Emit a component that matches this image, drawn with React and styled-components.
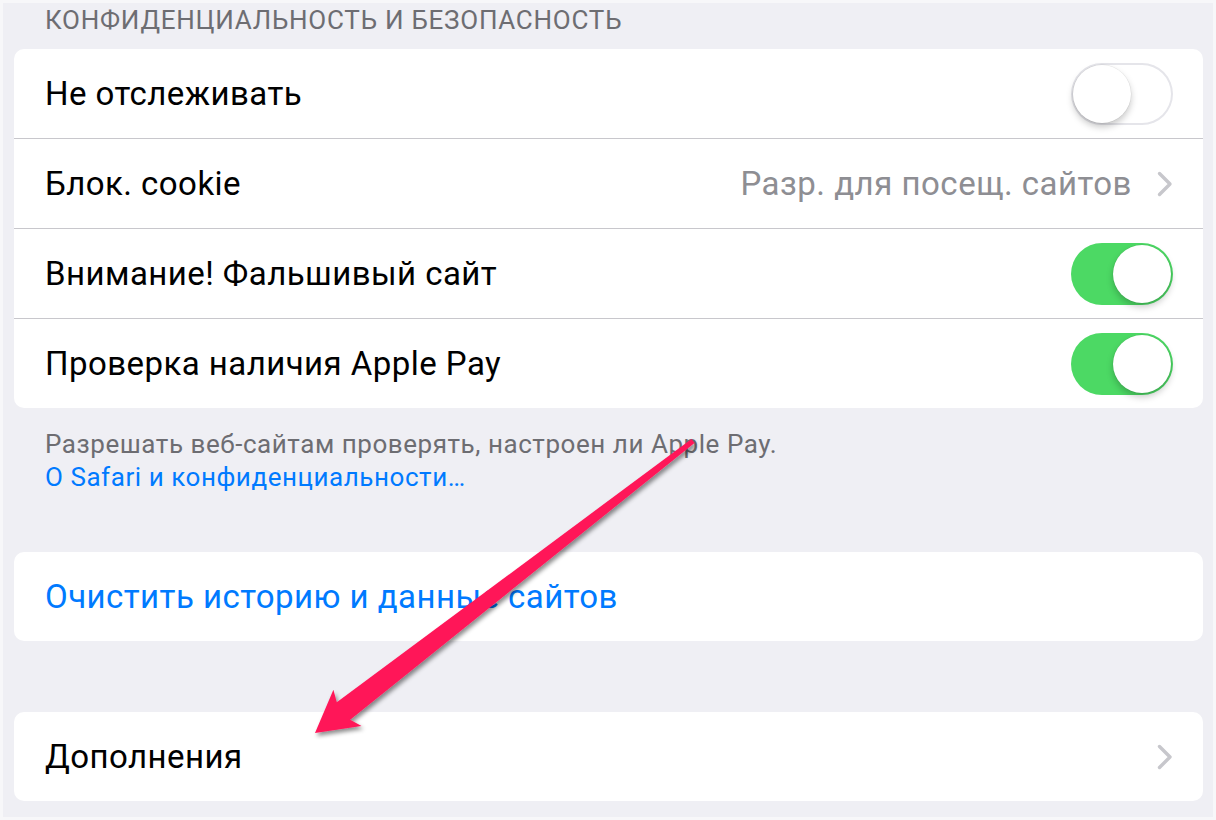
import React from 'react'
import styled, { createGlobalStyle } from 'styled-components'

const BG = '#efeff4'
const SEPARATOR = '#c8c7cc'
const BLUE = '#007aff'
const GREEN = '#4cd964'
const FONT = 'Roboto, "Liberation Sans", Arial, sans-serif'

const GlobalStyle = createGlobalStyle`
  html, body {
    margin: 0;
    padding: 0;
    background: ${BG};
  }
  body {
    font-family: ${FONT};
    -webkit-font-smoothing: antialiased;
  }
`

const Page = styled.div`
  position: relative;
  box-sizing: border-box;
  width: 1216px;
  height: 820px;
  border: 3px solid #f7f7f9;
  padding: 0 10px 0 11px;
  background: ${BG};
  overflow: hidden;
`

const SectionHeader = styled.div`
  height: 46px;
  box-sizing: border-box;
  padding: 4px 0 0 31px;
  font-size: 26px;
  line-height: 26px;
  letter-spacing: 0.75px;
  color: #6d6d72;
  text-transform: uppercase;
`

const Card = styled.div`
  background: #fff;
  border-radius: 10px;
  overflow: hidden;
  margin-bottom: ${p => p.$gap || 0}px;
`

const Row = styled.div`
  display: flex;
  align-items: center;
  height: 89px;
  padding: 0 30px 0 31px;
  & + & {
    border-top: 1px solid ${SEPARATOR};
  }
`

const Label = styled.span`
  flex: 1;
  font-size: 33px;
  letter-spacing: 0.45px;
  color: ${p => (p.$link ? BLUE : '#000')};
  white-space: nowrap;
`

const Value = styled.span`
  font-size: 33px;
  letter-spacing: 0.5px;
  color: #8e8e93;
  margin-right: 25px;
  white-space: nowrap;
`

const Track = styled.div`
  box-sizing: border-box;
  width: 102px;
  height: 62px;
  border-radius: 31px;
  padding: 2px;
  display: flex;
  align-items: center;
  justify-content: ${p => (p.$on ? 'flex-end' : 'flex-start')};
  background: ${p => (p.$on ? GREEN : '#fff')};
  box-shadow: ${p => (p.$on ? 'none' : 'inset 0 0 0 2px #e5e5ea')};
`

const Knob = styled.div`
  width: 58px;
  height: 58px;
  border-radius: 50%;
  background: #fff;
  box-shadow: 0 4px 7px rgba(0, 0, 0, 0.22), 0 0 0 0.5px rgba(0, 0, 0, 0.08);
`

const Footer = styled.div`
  height: 144px;
  box-sizing: border-box;
  padding: 20px 0 0 31px;
  font-size: 26px;
  line-height: 33px;
  letter-spacing: 0.55px;
  color: #6d6d72;
`

const FooterLink = styled.div`
  color: ${BLUE};
`

const Switch = ({ on }) => (
  <Track $on={on}>
    <Knob />
  </Track>
)

const Chevron = () => (
  <svg width="16" height="26" viewBox="0 0 16 26" fill="none">
    <path d="M2.5 2.5 L13 13 L2.5 23.5" stroke="#c7c7cc" strokeWidth="3.4" strokeLinecap="round" strokeLinejoin="round" />
  </svg>
)

const ArrowLayer = styled.svg`
  position: absolute;
  left: -3px;
  top: -3px;
  pointer-events: none;
`

function arrowPoints (tip, tail) {
  const dx = tail[0] - tip[0]
  const dy = tail[1] - tip[1]
  const len = Math.hypot(dx, dy)
  const u = [dx / len, dy / len]
  const n = [-u[1], u[0]]
  const at = (along, side, from = tip) => [
    from[0] + u[0] * along + n[0] * side,
    from[1] + u[1] * along + n[1] * side
  ]
  return [
    tip,
    at(41, -23),
    at(36, -11),
    at(0, -2.5, tail),
    at(0, 2.5, tail),
    at(36, 11),
    at(41, 23)
  ].map(p => p.map(v => v.toFixed(1)).join(',')).join(' ')
}

const Arrow = () => (
  <ArrowLayer width="1216" height="820">
    <defs>
      <filter id="arrowShadow" x="-10%" y="-10%" width="130%" height="130%">
        <feDropShadow dx="2" dy="3" stdDeviation="2" floodColor="#000" floodOpacity="0.45" />
      </filter>
    </defs>
    <polygon points={arrowPoints([315, 733], [693, 441])} fill="#ff1659" filter="url(#arrowShadow)" />
  </ArrowLayer>
)

export default function App () {
  return (
    <Page>
      <GlobalStyle />
      <SectionHeader>Конфиденциальность и безопасность</SectionHeader>
      <Card>
        <Row>
          <Label>Не отслеживать</Label>
          <Switch on={false} />
        </Row>
        <Row>
          <Label>Блок. cookie</Label>
          <Value>Разр. для посещ. сайтов</Value>
          <Chevron />
        </Row>
        <Row>
          <Label>Внимание! Фальшивый сайт</Label>
          <Switch on />
        </Row>
        <Row>
          <Label>Проверка наличия Apple Pay</Label>
          <Switch on />
        </Row>
      </Card>
      <Footer>
        <div>Разрешать веб-сайтам проверять, настроен ли Apple Pay.</div>
        <FooterLink>О Safari и конфиденциальности…</FooterLink>
      </Footer>
      <Card $gap={71}>
        <Row>
          <Label $link>Очистить историю и данные сайтов</Label>
        </Row>
      </Card>
      <Card>
        <Row>
          <Label>Дополнения</Label>
          <Chevron />
        </Row>
      </Card>
      <Arrow />
    </Page>
  )
}
